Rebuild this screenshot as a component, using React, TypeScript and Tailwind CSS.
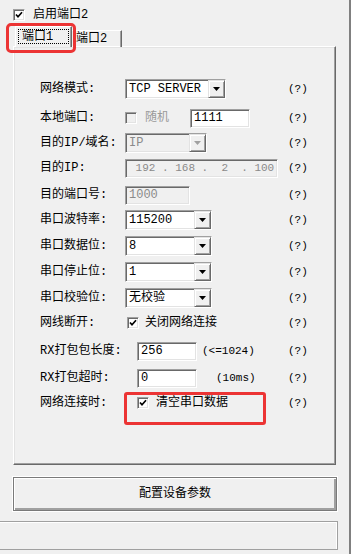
import React from "react";

const font = "font-['Liberation_Mono','Noto_Sans_CJK_SC',monospace]";
const sunken =
  "border border-t-[#a0a0a0] border-l-[#a0a0a0] border-b-white border-r-white shadow-[inset_1px_1px_0_#696969,inset_-1px_-1px_0_#e3e3e3]";
const raised =
  "border border-t-[#e3e3e3] border-l-[#e3e3e3] border-b-[#696969] border-r-[#696969] shadow-[inset_1px_1px_0_#fff,inset_-1px_-1px_0_#a0a0a0]";

const Check = ({ checked, disabled }: { checked?: boolean; disabled?: boolean }) => (
  <span
    className={`flex h-[12px] w-[12px] shrink-0 items-center justify-center ${sunken} ${
      disabled ? "bg-[#f0f0f0]" : "bg-white"
    }`}
  >
    {checked && (
      <svg width="8" height="8" viewBox="0 0 8 8">
        <path d="M1 3.5 L3 5.8 L7 1.3" stroke="#000" strokeWidth="1.7" fill="none" />
      </svg>
    )}
  </span>
);

const DropBtn = ({ disabled }: { disabled?: boolean }) => (
  <span className={`flex h-full w-[17px] items-center justify-center bg-[#f0f0f0] ${raised}`}>
    <svg width="7" height="4" viewBox="0 0 7 4">
      <path d="M0 0 H7 L3.5 4 Z" fill={disabled ? "#a0a0a0" : "#000"} />
    </svg>
  </span>
);

const Select = ({ value, w, disabled }: { value: string; w: string; disabled?: boolean }) => (
  <div className={`flex h-[20px] ${w} ${sunken} ${disabled ? "bg-[#f0f0f0]" : "bg-white"}`}>
    <span className={`flex-1 pl-[3px] leading-[18px] ${disabled ? "text-[#8a8a8a]" : "text-black"}`}>{value}</span>
    <DropBtn disabled={disabled} />
  </div>
);

const Field = ({
  value,
  w,
  disabled,
  className = "",
}: {
  value: string;
  w: string;
  disabled?: boolean;
  className?: string;
}) => (
  <div
    className={`flex h-[19px] items-center ${w} ${sunken} pl-[3px] ${
      disabled ? "bg-[#f0f0f0] text-[#8a8a8a]" : "bg-white text-black"
    } ${className}`}
  >
    {value}
  </div>
);

const Row = ({
  mt,
  label,
  children,
}: {
  mt: string;
  label: string;
  children: React.ReactNode;
}) => (
  <div className={`flex h-[20px] items-center ${mt}`}>
    <span className="w-[85px] shrink-0 whitespace-nowrap">{label}</span>
    <div className="relative flex h-full w-[163px] shrink-0 items-center">{children}</div>
    <span className="text-[11px]">(?)</span>
  </div>
);

export default function App() {
  return (
    <div className={`flex h-[554px] w-[351px] overflow-hidden bg-[#f0f0f0] text-[12px] text-black ${font}`}>
      <div className="flex w-[349px] flex-col">
        {/* enable checkbox */}
        <div className="ml-[13px] mt-[9px] flex h-[12px] items-center gap-[8px]">
          <Check checked />
          <span className="leading-none">启用端口2</span>
        </div>

        {/* tabs */}
        <div className="relative z-10 mt-[5px] ml-[15px] flex h-[21px] items-end">
          <div className="relative flex h-[21px] w-[57px] items-start border-l border-t border-r border-l-white border-t-white border-r-[#696969] bg-[#f0f0f0] px-[2px] pt-[2px] shadow-[inset_-1px_0_0_#a0a0a0]">
            <span className="flex h-[15px] w-full items-center border border-dotted border-black pl-[3px] leading-none">
              端口1
            </span>
            <div className="absolute left-[-10px] top-[-4px] h-[30px] w-[70px] rounded-[5px] border-[3px] border-[#ec3434]" />
          </div>
          <div className="flex h-[17px] w-[50px] items-center border-t border-r border-t-white border-r-[#696969] pl-[4px] leading-none shadow-[inset_-1px_0_0_#a0a0a0]">
            端口2
          </div>
        </div>

        {/* tab panel */}
        <div className="-mt-[1px] ml-[13px] flex h-[419px] w-[323px] flex-col border border-l-white border-t-white border-b-[#696969] border-r-[#696969] pl-[26px] pt-[32px] shadow-[inset_-1px_-1px_0_#a0a0a0,inset_1px_1px_0_#e3e3e3]">
          <Row mt="mt-0" label="网络模式:">
            <Select value="TCP SERVER" w="w-[101px]" />
          </Row>
          <Row mt="mt-[9px]" label="本地端口:">
            <Check disabled />
            <span className="ml-[8px] text-[#9a9a9a]">随机</span>
            <Field value="1111" w="w-[60px]" className="ml-[21px]" />
          </Row>
          <Row mt="mt-[5px]" label="目的IP/域名:">
            <Select value="IP" w="w-[82px]" disabled />
          </Row>
          <Row mt="mt-[5px]" label="目的IP:">
            <Field value=" 192 . 168 .  2  . 100" w="w-[153px]" disabled className="whitespace-pre text-[11px]" />
          </Row>
          <Row mt="mt-[7px]" label="目的端口号:">
            <Field value="1000" w="w-[65px]" disabled />
          </Row>
          <Row mt="mt-[5px]" label="串口波特率:">
            <Select value="115200" w="w-[87px]" />
          </Row>
          <Row mt="mt-[6px]" label="串口数据位:">
            <Select value="8" w="w-[87px]" />
          </Row>
          <Row mt="mt-[6px]" label="串口停止位:">
            <Select value="1" w="w-[87px]" />
          </Row>
          <Row mt="mt-[6px]" label="串口校验位:">
            <Select value="无校验" w="w-[87px]" />
          </Row>
          <Row mt="mt-[5px]" label="网线断开:">
            <span className="ml-[2px]">
              <Check checked />
            </span>
            <span className="ml-[6px]">关闭网络连接</span>
          </Row>
          <Row mt="mt-[8px]" label="RX打包包长度:">
            <Field value="256" w="w-[60px]" className="ml-[12px]" />
            <span className="ml-[5px] text-[11px]">(&lt;=1024)</span>
          </Row>
          <Row mt="mt-[7px]" label="RX打包超时:">
            <Field value="0" w="w-[60px]" className="ml-[12px]" />
            <span className="ml-[19px] text-[11px]">(10ms)</span>
          </Row>
          <Row mt="mt-[5px]" label="网络连接时:">
            <span className="ml-[12px]">
              <Check checked />
            </span>
            <span className="ml-[7px]">清空串口数据</span>
            <div className="absolute left-[-1px] top-[-1px] h-[33px] w-[142px] rounded-[3px] border-[3px] border-[#ec3434]" />
          </Row>
        </div>

        {/* button */}
        <div className="ml-[12px] mt-[11px] h-[36px] w-[326px] border border-white">
          <div className="flex h-full w-full items-center justify-center border border-[#7a7a7a] bg-[#f0f0f0] shadow-[inset_1px_1px_0_#fff,inset_-2px_-2px_0_#a0a0a0]">
            配置设备参数
          </div>
        </div>

        {/* status group */}
        <div className="mt-[9px] h-[29px] w-[338px] border-t border-b border-r border-[#a0a0a0] shadow-[inset_0_1px_0_#fff,inset_-1px_0_0_#fff]" />
      </div>
      <div className="w-[2px] bg-[#808080]" />
    </div>
  );
}
